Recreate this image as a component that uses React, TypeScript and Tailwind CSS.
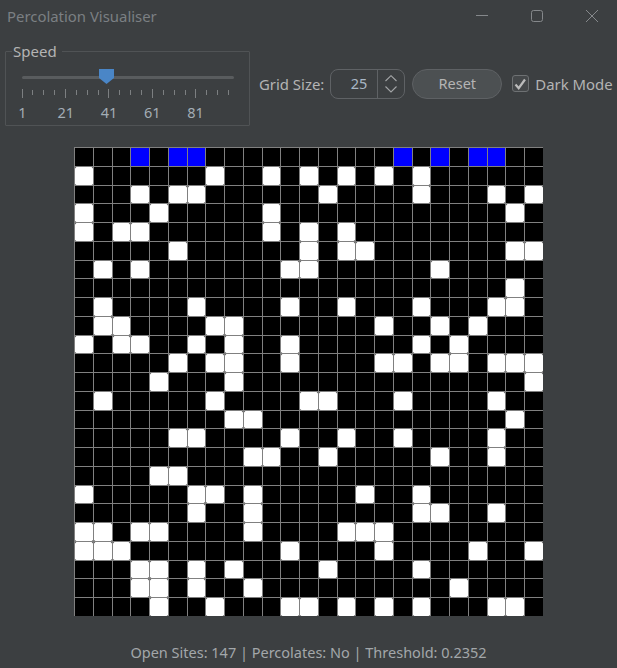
import React from 'react';

// open cells per row, the first row is the blue one
const OPEN_CELLS: number[][] = [
  [3, 5, 6, 17, 19, 21, 22],
  [0, 7, 10, 12, 14, 16, 18],
  [3, 5, 6, 13, 18, 22, 24],
  [0, 4, 10, 23],
  [0, 2, 3, 10, 12, 14],
  [5, 12, 14, 15, 23, 24],
  [1, 3, 11, 12, 19],
  [23],
  [1, 6, 11, 14, 18, 22, 23],
  [1, 2, 7, 8, 16, 19, 21],
  [0, 2, 3, 6, 8, 11, 18, 20],
  [5, 7, 8, 11, 16, 17, 19, 20, 22, 23, 24],
  [4, 8, 24],
  [1, 7, 12, 13, 17, 22],
  [8, 9, 23],
  [5, 6, 11, 14, 17, 22],
  [9, 10, 13, 19, 22],
  [4, 5],
  [0, 6, 7, 9, 15, 18],
  [6, 9, 18, 19, 22],
  [0, 1, 3, 4, 9, 14, 15, 16],
  [0, 1, 2, 11, 16, 21, 24],
  [3, 4, 6, 8, 13, 18],
  [3, 4, 6, 9, 20],
  [4, 7, 11, 12, 14, 16, 18, 22, 23],
];

const TICK_LABELS = ['1', '21', '41', '61', '81'];

const WindowButtons: React.FC = () => (
  <div className="flex items-center gap-[43px] pr-[19px] text-[#85888b]">
    <svg width="12" height="12" viewBox="0 0 12 12" fill="none" stroke="currentColor">
      <path d="M0 5.5h12" />
    </svg>
    <svg width="12" height="12" viewBox="0 0 12 12" fill="none" stroke="currentColor">
      <rect x="0.5" y="0.5" width="11" height="11" rx="2" />
    </svg>
    <svg width="12" height="12" viewBox="0 0 12 12" fill="none" stroke="currentColor">
      <path d="M0 0l12 12M12 0L0 12" />
    </svg>
  </div>
);

const SpeedSlider: React.FC = () => (
  <fieldset className="w-[245px] h-[84px] border border-[#505355] rounded-[1px] ml-[5px] pl-[6px]">
    <legend className="pl-[1px] pr-[5px] text-[15px] leading-[19px] text-[#b4b4b4]">Speed</legend>
    <div className="relative ml-[10px] mt-[8px] h-[16px] w-[212px] flex items-center">
      <div className="h-[3px] w-full rounded-full bg-[#595c5e]" />
      <svg className="absolute left-[77px] top-0" width="15" height="15" viewBox="0 0 15 15">
        <path d="M0 0h15v9l-7.5 6L0 9z" fill="#4a86c7" />
      </svg>
    </div>
    <svg className="ml-[9px] mt-[4px] block" width="212" height="10" viewBox="0 0 212 10" stroke="#7c7f81">
      {Array.from({ length: 20 }, (_, i) => {
        const x = Math.round(0.5 + i * 10.87) + 0.5;
        return <path key={i} d={`M${x} ${i % 4 === 0 ? 0 : 1}v${i % 4 === 0 ? 9 : 5}`} />;
      })}
    </svg>
    <div className="ml-[10.5px] mt-[3px] flex gap-[43.25px] text-[14.5px] leading-[20px] text-[#a3adb5]">
      {TICK_LABELS.map((label) => (
        <span key={label} className="w-0 flex justify-center">
          {label}
        </span>
      ))}
    </div>
  </fieldset>
);

const GridSizeSpinner: React.FC = () => (
  <div className="flex h-[30px] w-[75px] rounded-[8px] border border-[#5f6265] ml-[6px]">
    <div className="w-[47px] border-r border-[#5f6265] flex items-center justify-end pr-[10px] text-[14.5px] text-[#a9b7c6]">
      25
    </div>
    <div className="flex-1 flex items-center justify-center">
      <svg width="12" height="18" viewBox="0 0 12 18" fill="none" stroke="#a3a5a7" strokeWidth="1.1">
        <path d="M0.5 6L6 0.7 11.5 6M0.5 11.5L6 17 11.5 11.5" />
      </svg>
    </div>
  </div>
);

const Grid: React.FC = () => (
  <div className="mx-auto grid w-[469px] h-[469px] grid-cols-[repeat(25,18.75px)] grid-rows-[repeat(25,18.75px)] mt-[21px]">
    {OPEN_CELLS.flatMap((open, row) =>
      Array.from({ length: 25 }, (_, col) => {
        const isOpen = open.includes(col);
        return (
          <div key={`${row}-${col}`} className="border-l border-t border-[#808080] bg-black">
            {isOpen && row === 0 && <div className="h-full w-full bg-[#0000ff]" />}
            {isOpen && row > 0 && <div className="h-full w-full rounded-[1.5px] bg-white" />}
          </div>
        );
      })
    )}
  </div>
);

export default function App() {
  return (
    <div className="w-[617px] h-[668px] overflow-hidden bg-[#3c3f41] font-['Noto_Sans','Open_Sans',sans-serif]">
      <div className="h-[32px] flex items-center justify-between">
        <span className="pl-[7px] text-[14.9px] text-[#7b7f83]">Percolation Visualiser</span>
        <WindowButtons />
      </div>

      <div className="flex items-start mt-[10px]">
        <SpeedSlider />
        <div className="flex items-center h-[30px] mt-[27px] ml-[9px] text-[14.9px] text-[#b4b4b4]">
          <span>Grid Size:</span>
          <GridSizeSpinner />
          <button className="ml-[7px] h-[30px] w-[90px] rounded-full border border-[#5e6164] bg-[#4c5052] text-[14.5px] text-[#b4b4b4]">
            Reset
          </button>
          <label className="ml-[10px] flex items-center gap-[6px]">
            <span className="flex h-[17px] w-[17px] items-center justify-center rounded-[3px] border border-[#6e7173] bg-[#45484a]">
              <svg width="13" height="12" viewBox="0 0 13 12" fill="none" stroke="#bcbcbc" strokeWidth="2.2">
                <path d="M1.5 6.5l3.2 3.7L11 1.5" />
              </svg>
            </span>
            <span>Dark Mode</span>
          </label>
        </div>
      </div>

      <Grid />

      <div className="mt-[26px] text-center text-[14.5px] leading-[20px] text-[#a3a7aa]">
        Open Sites: 147 | Percolates: No | Threshold: 0.2352
      </div>
    </div>
  );
}
